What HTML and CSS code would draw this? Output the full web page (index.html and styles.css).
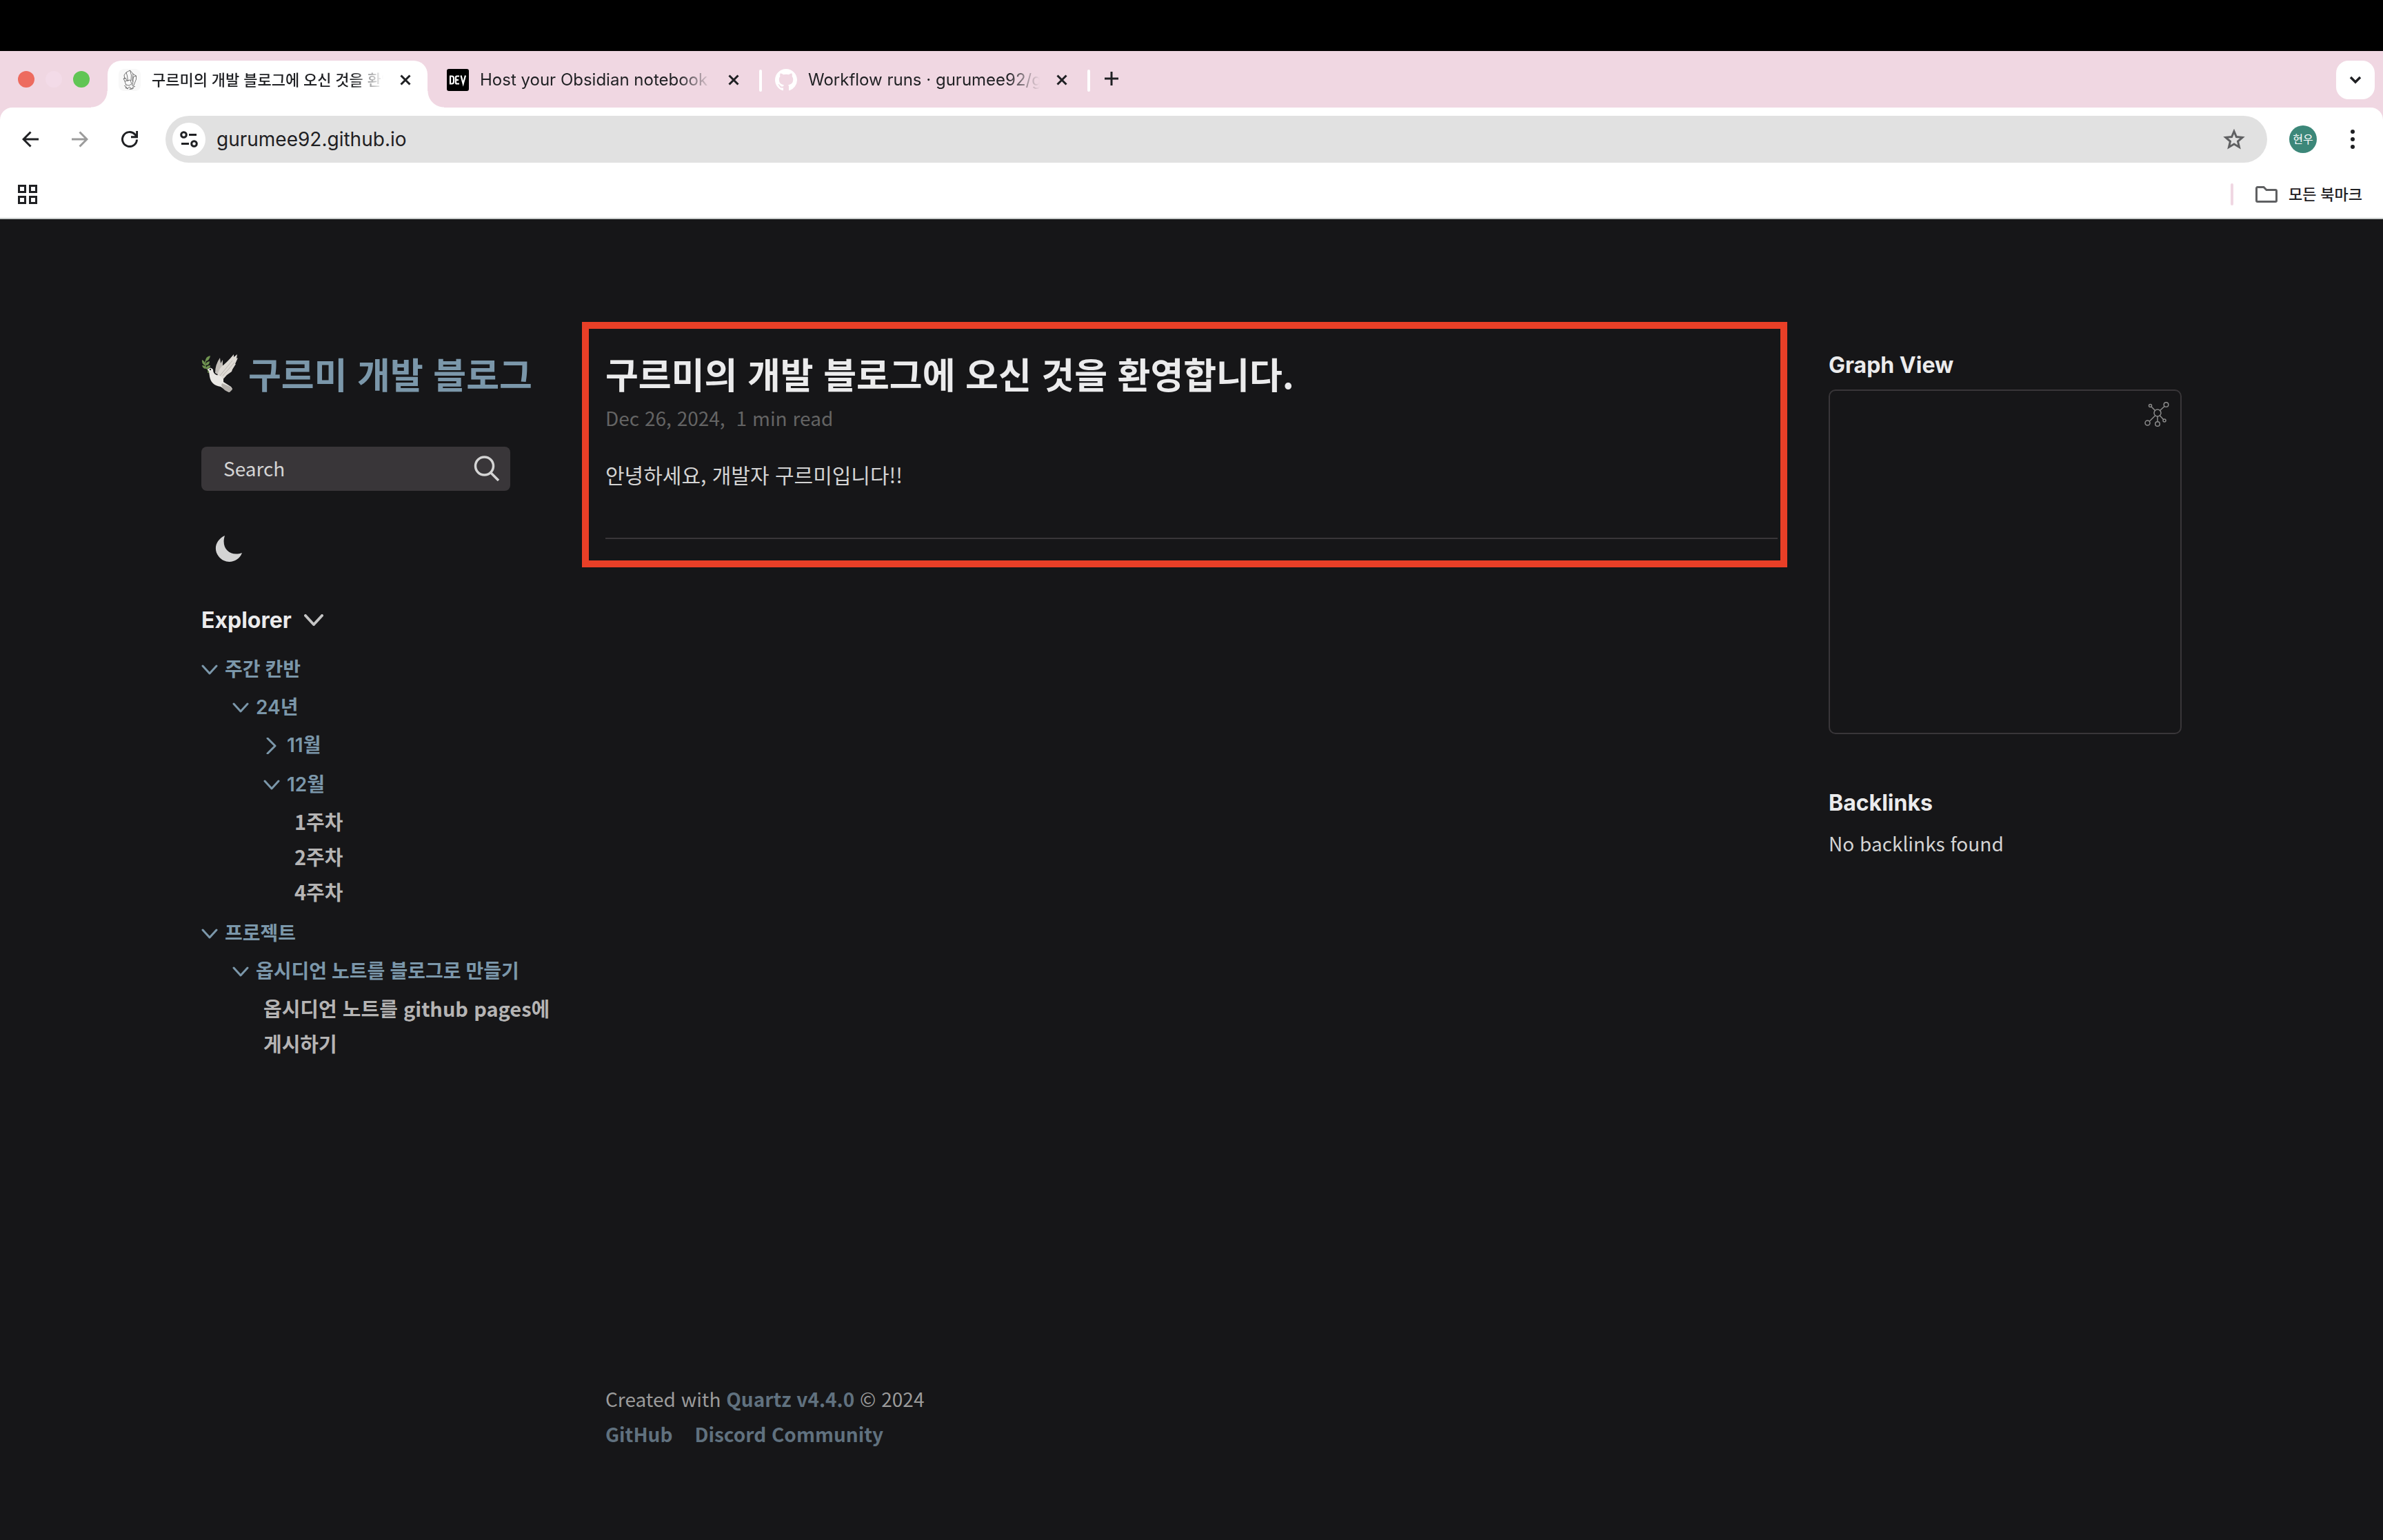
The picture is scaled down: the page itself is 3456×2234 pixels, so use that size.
FILE: index.html
```html
<!DOCTYPE html>
<html lang="ko">
<head>
<meta charset="utf-8">
<title>구르미의 개발 블로그에 오신 것을 환영합니다.</title>
<link rel="stylesheet" href="styles.css">
</head>
<body>
<div class="menubar"></div>
<header class="browser">
  <div class="tabstrip">
    <div class="lights"><span class="light red"></span><span class="light idle"></span><span class="light green"></span></div>
    <div class="tab active">
      <svg class="favicon" viewBox="0 0 32 32"><rect width="32" height="32" rx="8" fill="#f8f8f8"/><g fill="none" stroke="#555" stroke-width="0.800" stroke-linejoin="round"><path d="M11 5l5.500-3 4.500 5-1 10M11 5L8 9l1 6M11 5l1.500 5 1 8M16.500 2l2 7-.5 8M20.500 7l5 3v5l-4 10M25.500 10l-4 1.500-1 7M7 14l3-1 2 4-3 1-2-4zM9 18l2 6M12 17l5-1 2 6-4 2-4-1M21 17l-1 8"/><path d="M8 24l3 2 1.500 2.500L16 26l3 3 2-3 3-.5M11 26l-1 1.500 4 1.500M17 28l-1 1.500 4-.5 2-1.500"/></g></svg>
      <span class="tab-title">구르미의 개발 블로그에 오신 것을 환영합니다.</span>
      <button class="icon-btn" aria-label="Close tab"><svg width="16" height="16" viewBox="0 0 16 16"><path d="M1.500 1.500l13 13M14.500 1.500l-13 13" stroke="currentColor" stroke-width="3"/></svg></button>
    </div>
    <div class="tab">
      <svg class="favicon" viewBox="0 0 32 32"><rect width="32" height="32" rx="3"/><g fill="none" stroke="#fff" stroke-width="2.200"><path d="M5 10.500v11h2q3 0 3-3v-5q0-3-3-3H4M18 10.500h-3.500q-1.500 0-1.500 1.500v8q0 1.500 1.500 1.500H18M13.500 16H17M20.500 9.500l3.200 12 3.300-12"/></g></svg>
      <span class="tab-title">Host your Obsidian notebook on GitHub</span>
      <button class="icon-btn" aria-label="Close tab"><svg width="16" height="16" viewBox="0 0 16 16"><path d="M1.500 1.500l13 13M14.500 1.500l-13 13" stroke="currentColor" stroke-width="3"/></svg></button>
    </div>
    <div class="tab">
      <svg class="favicon" viewBox="0 0 16 16"><path fill="#fff" d="M8 0C3.580 0 0 3.580 0 8c0 3.540 2.290 6.530 5.470 7.590.4.070.55-.17.55-.38 0-.19-.01-.82-.01-1.490-2.010.37-2.530-.49-2.690-.94-.09-.23-.48-.94-.82-1.130-.28-.15-.68-.52-.01-.53.63-.01 1.080.58 1.230.82.72 1.210 1.870.87 2.330.66.070-.52.28-.87.51-1.070-1.780-.2-3.640-.89-3.640-3.950 0-.87.31-1.590.82-2.150-.08-.2-.36-1.020.08-2.120 0 0 .67-.21 2.200.82.64-.18 1.320-.27 2-.27s1.360.09 2 .27c1.530-1.040 2.200-.82 2.200-.82.44 1.100.16 1.920.08 2.120.51.56.82 1.270.82 2.150 0 3.070-1.870 3.750-3.650 3.950.29.25.54.73.54 1.480 0 1.070-.01 1.930-.01 2.200 0 .21.15.46.55.38A8.010 8.010 0 0 0 16 8c0-4.420-3.580-8-8-8z"/></svg>
      <span class="tab-title">Workflow runs · gurumee92/gurumee92.github.io</span>
      <button class="icon-btn" aria-label="Close tab"><svg width="16" height="16" viewBox="0 0 16 16"><path d="M1.500 1.500l13 13M14.500 1.500l-13 13" stroke="currentColor" stroke-width="3"/></svg></button>
    </div>
    <button class="icon-btn new-tab" aria-label="New tab"><svg width="20" height="20" viewBox="0 0 20 20"><path d="M10 0v20M0 10h20" stroke="currentColor" stroke-width="3"/></svg></button>
    <button class="icon-btn tab-search" aria-label="Search tabs"><svg width="18" height="12" viewBox="0 0 18 12"><path d="M2 2l7 7 7-7" fill="none" stroke="currentColor" stroke-width="3.500"/></svg></button>
  </div>
  <div class="toolbar">
    <div class="nav">
      <button class="icon-btn" aria-label="Back"><svg width="24" height="24" viewBox="0 0 24 24"><path d="M24 12H2M12.500 1.500L2 12l10.500 10.500" fill="none" stroke="currentColor" stroke-width="3"/></svg></button>
      <button class="icon-btn disabled" aria-label="Forward"><svg width="24" height="24" viewBox="0 0 24 24"><path d="M0 12h22M11.500 1.500L22 12 11.500 22.500" fill="none" stroke="currentColor" stroke-width="3"/></svg></button>
      <button class="icon-btn" aria-label="Reload"><svg width="24" height="24" viewBox="0 0 24 24"><path d="M22.500 12.500A10.500 10.500 0 1 1 19.500 4.700L22 7.500M22.700 0v8.700H14" fill="none" stroke="currentColor" stroke-width="3"/></svg></button>
    </div>
    <div class="omnibox">
      <button class="icon-btn site-info" aria-label="Site information"><svg width="26" height="24" viewBox="0 0 26 24"><g fill="none" stroke="currentColor" stroke-width="3"><circle cx="5.500" cy="5.500" r="3.800"/><path d="M13 5.500h11M2 18.500h11"/><circle cx="20.500" cy="18.500" r="3.800"/></g></svg></button>
      <input class="url" type="text" aria-label="Address" value="gurumee92.github.io">
      <button class="icon-btn star" aria-label="Bookmark"><svg width="32" height="30" viewBox="0 0 32 30"><path d="M16 3.500l3.400 8 8.700.8-6.600 5.700 2 8.500L16 22l-7.500 4.500 2-8.500-6.600-5.700 8.700-.8z" fill="none" stroke="currentColor" stroke-width="3"/></svg></button>
    </div>
    <button class="avatar" aria-label="Profile">현우</button>
    <button class="icon-btn kebab" aria-label="Menu"><svg width="6" height="28" viewBox="0 0 6 28"><g fill="currentColor"><circle cx="3" cy="3" r="3"/><circle cx="3" cy="14" r="3"/><circle cx="3" cy="25" r="3"/></g></svg></button>
  </div>
  <div class="bookmarks">
    <button class="icon-btn" aria-label="Apps"><svg width="28" height="28" viewBox="0 0 28 28"><g fill="none" stroke="currentColor" stroke-width="3"><path d="M1.500 1.500h9v9h-9zM17.500 1.500h9v9h-9zM1.500 17.500h9v9h-9zM17.500 17.500h9v9h-9z"/></g></svg></button>
    <button class="icon-btn all-bookmarks"><svg width="32" height="24" viewBox="0 0 32 24"><path d="M3 1.500h9l4 4h13a1.500 1.500 0 0 1 1.500 1.500v14a1.500 1.500 0 0 1-1.500 1.500H3A1.500 1.500 0 0 1 1.500 21V3A1.500 1.500 0 0 1 3 1.500z" fill="none" stroke="#5f6062" stroke-width="3"/></svg>모든 북마크</button>
  </div>
</header>

<div class="page">
  <aside class="sidebar left">
    <h2 class="site-title"><a href="#">
      <svg class="dove" viewBox="0 0 54 56">
        <g fill="#6f9350"><path d="M13 2q-7 1-7 8 6-1 7-8zM1 8q-1 5 4 8 1-6-4-8zM12 10q-6 1-6 6 6 0 6-6zM1 16q1 5 6 5-1-5-6-5zM13 16q-6 0-6 5 6 0 6-5z"/><path d="M8 7Q4 12 6 18l4 5v4" fill="none" stroke="#6f9350" stroke-width="1.500"/></g>
        <path d="M20 27q0-12 7-22l1 8 3-5 0 8 3 3-7 12z" fill="#c2beb8"/>
        <path d="M23 36q0-11 6-18 8-6 18-18l0 4 5-4-1 6 2-1-4 9 1 0-5 8-1 3-7 5q-4 5-8 8z" fill="#dedad4"/>
        <path d="M9 22q4-5 8 0 0 6 5 8 7 1 10 6l0 4 11 7 2 3-5 5-12-8Q14 45 12 32l-1-7z" fill="#eae8e4"/>
        <path d="M30 42l12 5 3 4-4 4q-9-2-12-10z" fill="#b5b1ac"/>
        <path d="M27 31L45 9M31 31l17-19" stroke="#bab6b0" stroke-width="1"/>
        <circle cx="13" cy="22" r="1.200" fill="#222"/>
      </svg>구르미 개발 블로그</a></h2>
    <button class="search"><span>Search</span><svg width="38" height="38" viewBox="0 0 38 38"><g fill="none" stroke="currentColor" stroke-width="3.500"><circle cx="15.500" cy="16" r="13"/><path d="M25 26l11 11"/></g></svg></button>
    <button class="darkmode" aria-label="Dark mode"><svg width="40" height="40" viewBox="0 0 40 40"><path d="M14 1C1 7-3 21 5 31c10 13 29 9 34-5C22 32 8 20 14 1z" fill="currentColor"/></svg></button>
    <nav class="explorer">
      <button class="explorer-title"><span>Explorer</span><svg width="28" height="18" viewBox="0 0 28 18"><path d="M2 2l12 13L26 2" fill="none" stroke="#c4c4c4" stroke-width="4" stroke-linecap="round" stroke-linejoin="round"/></svg></button>
      <ul class="tree">
        <li>
          <button class="folder"><svg class="chevron" viewBox="0 0 24 24"><path d="M2 6l10 11L22 6"/></svg>주간 칸반</button>
          <ul>
            <li>
              <button class="folder"><svg class="chevron" viewBox="0 0 24 24"><path d="M2 6l10 11L22 6"/></svg>24년</button>
              <ul>
                <li class="closed"><button class="folder"><svg class="chevron" viewBox="0 0 24 24"><path d="M6 1l11 11L6 23"/></svg>11월</button></li>
                <li>
                  <button class="folder"><svg class="chevron" viewBox="0 0 24 24"><path d="M2 6l10 11L22 6"/></svg>12월</button>
                  <ul>
                    <li><a class="file" href="#">1주차</a></li>
                    <li><a class="file" href="#">2주차</a></li>
                    <li><a class="file" href="#">4주차</a></li>
                  </ul>
                </li>
              </ul>
            </li>
          </ul>
        </li>
        <li>
          <button class="folder"><svg class="chevron" viewBox="0 0 24 24"><path d="M2 6l10 11L22 6"/></svg>프로젝트</button>
          <ul>
            <li>
              <button class="folder"><svg class="chevron" viewBox="0 0 24 24"><path d="M2 6l10 11L22 6"/></svg>옵시디언 노트를 블로그로 만들기</button>
              <ul>
                <li><a class="file" href="#">옵시디언 노트를 github pages에 게시하기</a></li>
              </ul>
            </li>
          </ul>
        </li>
      </ul>
    </nav>
  </aside>

  <main class="center">
    <article class="highlighted">
      <h1>구르미의 개발 블로그에 오신 것을 환영합니다.</h1>
      <p class="meta"><span>Dec 26, 2024,</span><span>1 min read</span></p>
      <p class="intro">안녕하세요, 개발자 구르미입니다!!</p>
      <hr>
    </article>
    <footer>
      <p>Created with <a href="#">Quartz v4.4.0</a> © 2024</p>
      <ul class="links">
        <li><a href="#">GitHub</a></li>
        <li><a href="#">Discord Community</a></li>
      </ul>
    </footer>
  </main>

  <aside class="sidebar right">
    <section>
      <h3>Graph View</h3>
      <div class="graph">
        <button class="graph-btn" aria-label="Global graph"><svg width="36" height="36" viewBox="0 0 36 36"><g fill="none" stroke="currentColor" stroke-width="1.500"><circle cx="19" cy="16" r="5"/><circle cx="8.500" cy="5.500" r="2"/><circle cx="31.500" cy="4" r="3.300"/><circle cx="4.500" cy="30.500" r="3.500"/><circle cx="19" cy="32" r="3.300"/><circle cx="29" cy="27" r="2"/><path d="M10 7l5.500 5.500M29 6.500l-6.500 6M15.500 20L7 28.500M19 21v7.500M22.500 20l5 5.500"/></g></svg></button>
      </div>
    </section>
    <section>
      <h3>Backlinks</h3>
      <p class="empty">No backlinks found</p>
    </section>
  </aside>
</div>
</body>
</html>
```
FILE: styles.css
```css
:root {
  --bg: #161618;
  --lightgray: #393639;
  --gray: #646464;
  --darkgray: #d4d4d4;
  --dark: #ebebec;
  --secondary: #7b97aa;
  --theme: #f0d7e2;
  --ink: #1f2023;
  --body-font: "Noto Sans CJK KR", sans-serif;
  --head-font: Inter, "Noto Sans CJK KR", sans-serif;
}

* { box-sizing: border-box; }

body {
  margin: 0;
  min-height: 100vh;
  display: flex;
  flex-direction: column;
  background: var(--bg);
  color: var(--darkgray);
  font-family: var(--body-font);
}

h1, h2, h3, p, ul { margin: 0; padding: 0; }
ul { list-style: none; }
a { color: inherit; text-decoration: none; }
svg { display: block; flex: none; }

button {
  padding: 0;
  border: 0;
  background: none;
  color: inherit;
  font: inherit;
  text-align: left;
}

/* Browser chrome */
.menubar { height: 74px; background: #000; }

.browser {
  background: var(--theme);
  color: var(--ink);
  font-family: var(--head-font);
  border-bottom: 2px solid #c8cccb;
}

.icon-btn { display: flex; align-items: center; justify-content: center; flex: none; }

.tabstrip {
  display: flex;
  align-items: flex-start;
  height: 82px;
  padding: 14px 12px 0 26px;
}

.lights { display: flex; gap: 16px; width: 130px; padding-top: 15px; }
.light { width: 24px; height: 24px; border-radius: 50%; }
.red { background: #ed6b5f; }
.idle { background: #f3dbe8; }
.green { background: #61c554; }

.tab {
  position: relative;
  display: flex;
  align-items: center;
  width: 464px;
  height: 68px;
  margin-right: 12px;
  padding: 0 24px 12px 16px;
}

.tab.active { background: #fff; border-radius: 20px 20px 0 0; }

.tab.active::before,
.tab.active::after {
  content: "";
  position: absolute;
  bottom: 0;
  width: 24px;
  height: 24px;
}
.tab.active::before { right: 100%; background: radial-gradient(circle at 0 0, transparent 23px, #fff 24px); }
.tab.active::after { left: 100%; background: radial-gradient(circle at 100% 0, transparent 23px, #fff 24px); }

.tab:not(.active)::after {
  content: "";
  position: absolute;
  top: 13px;
  left: 469px;
  width: 4px;
  height: 32px;
  border-radius: 2px;
  background: #fff;
}

.favicon { width: 32px; height: 32px; margin-right: 16px; }

.tab-title {
  flex: 1;
  margin-right: 24px;
  overflow: hidden;
  white-space: nowrap;
  font-size: 24px;
  line-height: 40px;
  -webkit-mask-image: linear-gradient(to right, #000 calc(100% - 48px), transparent);
  mask-image: linear-gradient(to right, #000 calc(100% - 48px), transparent);
}
.active .tab-title { font-size: 22px; font-weight: 500; }

.new-tab { margin: 16px 0 0 18px; }

.tab-search {
  width: 56px;
  height: 56px;
  margin-left: auto;
  border-radius: 18px;
  background: #fff;
}

.toolbar {
  display: flex;
  align-items: center;
  height: 92px;
  padding: 0 41px 0 32px;
  background: #fff;
  border-radius: 18px 18px 0 0;
}

.nav { display: flex; gap: 48px; width: 208px; }
.disabled { color: #9b9b9b; }

.omnibox {
  flex: 1;
  display: flex;
  align-items: center;
  height: 68px;
  padding: 0 32px 0 10px;
  border-radius: 34px;
  background: #e1e1e1;
}

.site-info { width: 48px; height: 48px; border-radius: 50%; background: #fff; }

.url {
  flex: 1;
  margin-left: 16px;
  padding: 0;
  border: 0;
  outline: 0;
  background: none;
  color: var(--ink);
  font-family: var(--head-font);
  font-size: 28px;
}

.star { color: #5f6062; }

.avatar {
  width: 40px;
  height: 40px;
  margin: 0 49px 0 32px;
  border-radius: 50%;
  background: #3c8779;
  color: #fff;
  font-size: 16px;
  line-height: 40px;
  text-align: center;
}

.bookmarks {
  display: flex;
  align-items: center;
  justify-content: space-between;
  height: 68px;
  padding: 0 30px 0 26px;
  background: #fff;
}

.all-bookmarks { gap: 16px; font-size: 22px; line-height: 32px; font-weight: 500; }
.all-bookmarks::before {
  content: "";
  width: 4px;
  height: 32px;
  margin-right: 16px;
  border-radius: 2px;
  background: var(--theme);
}

/* Page */
.page {
  flex: 1;
  display: grid;
  grid-template-columns: 512px minmax(0, 1fr) 512px;
  gap: 74px;
  width: 100%;
  max-width: 2872px;
  margin: 0 auto;
  padding: 182px 0 128px;
}

.sidebar.left { display: flex; flex-direction: column; align-items: flex-start; gap: 64px; }

.site-title { font-size: 52px; line-height: 84px; font-weight: 700; color: var(--secondary); }
.site-title a { display: flex; align-items: center; gap: 14px; white-space: nowrap; }
.dove { width: 54px; height: 56px; }

.search {
  display: flex;
  align-items: center;
  justify-content: space-between;
  width: 448px;
  height: 64px;
  padding: 0 15px 2px 32px;
  border-radius: 8px;
  background: var(--lightgray);
  font-size: 28px;
}

.darkmode { margin-left: 20px; }

.explorer { width: 100%; }

.explorer-title {
  display: flex;
  align-items: center;
  gap: 18px;
  margin-bottom: 24px;
  color: var(--dark);
  font-family: var(--head-font);
  font-size: 32px;
  line-height: 40px;
  font-weight: 700;
}

.tree ul { padding-left: 45px; }
.tree > li + li { margin-top: 8px; }
.closed { padding-bottom: 2px; }

.folder {
  display: flex;
  align-items: center;
  gap: 10px;
  color: var(--secondary);
  font-family: var(--head-font);
  font-size: 28px;
  line-height: 55px;
  font-weight: 600;
  white-space: nowrap;
}

.chevron {
  width: 24px;
  height: 24px;
  fill: none;
  stroke: currentColor;
  stroke-width: 3;
  stroke-linecap: round;
  stroke-linejoin: round;
}

.file {
  display: block;
  color: #b5b4b4;
  font-size: 29px;
  line-height: 51px;
  font-weight: 600;
  word-break: keep-all;
}

.center { display: flex; flex-direction: column; justify-content: space-between; }

.highlighted { position: relative; }
.highlighted::after {
  content: "";
  position: absolute;
  inset: -33px -14px -41px -34px;
  border: 10px solid #e93f27;
  pointer-events: none;
}

h1 { color: var(--dark); font-size: 52px; line-height: 84px; font-weight: 700; }
.meta { display: flex; gap: 16px; color: var(--gray); font-size: 28px; line-height: 44px; }
.intro { margin: 34px 0 66px; font-size: 30px; line-height: 52px; }
hr { width: 100%; height: 2px; margin: 0; border: 0; background: var(--lightgray); }

footer { color: #9b9b9b; font-size: 28px; line-height: 51px; }
footer a { color: #60717f; font-weight: 600; }
.links { display: flex; gap: 32px; }

h3 {
  color: var(--dark);
  font-family: var(--head-font);
  font-size: 32px;
  line-height: 60px;
  font-weight: 700;
}

.sidebar.right { display: flex; flex-direction: column; gap: 70px; }

.graph {
  display: flex;
  align-items: flex-start;
  justify-content: flex-end;
  height: 500px;
  margin-top: 5px;
  padding: 16px;
  border: 2px solid var(--lightgray);
  border-radius: 10px;
}
.graph-btn { color: #8b8b8b; }

.empty { font-size: 28px; line-height: 56px; }
```
